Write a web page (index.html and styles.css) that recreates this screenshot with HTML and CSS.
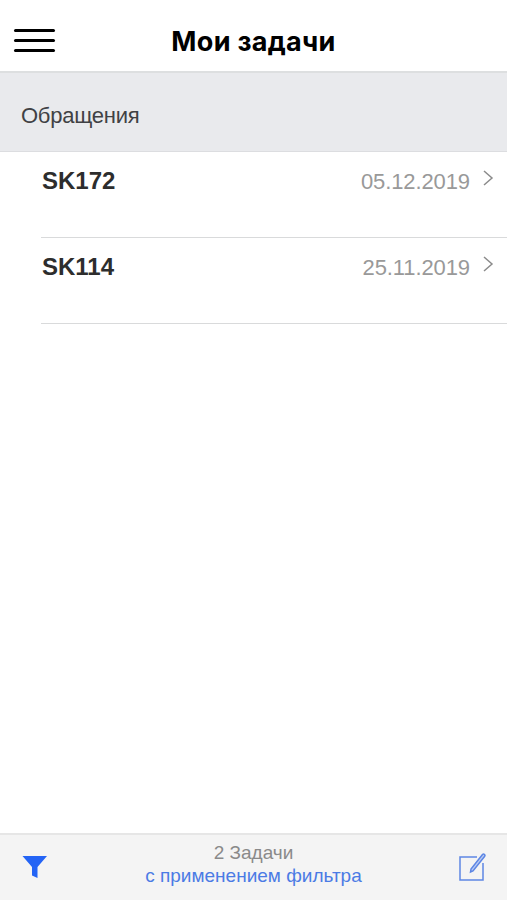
FILE: index.html
```html
<!DOCTYPE html>
<html lang="ru">
<head>
  <meta charset="UTF-8">
  <meta name="viewport" content="width=device-width, initial-scale=1.0">
  <title>Мои задачи</title>
  <link rel="stylesheet" href="styles.css">
</head>
<body>
  <header class="header">
    <button class="menu-btn" aria-label="Меню">
      <span></span>
      <span></span>
      <span></span>
    </button>
    <h1>Мои задачи</h1>
  </header>

  <main class="content">
    <h2 class="section-title">Обращения</h2>
    <ul class="task-list">
      <li class="task">
        <span class="task-name">SK172</span>
        <span class="task-date">05.12.2019</span>
        <svg class="chevron" width="12" height="18" viewBox="0 0 12 18"><path d="M2 2l8 7-8 7"/></svg>
      </li>
      <li class="task">
        <span class="task-name">SK114</span>
        <span class="task-date">25.11.2019</span>
        <svg class="chevron" width="12" height="18" viewBox="0 0 12 18"><path d="M2 2l8 7-8 7"/></svg>
      </li>
    </ul>
  </main>

  <footer class="footer">
    <button class="icon-btn" aria-label="Фильтр">
      <svg width="26" height="24" viewBox="0 0 26 24"><path class="funnel" d="M.5 1h24.500l-9.500 11v11l-5.500-2.500v-8.500z"/></svg>
    </button>
    <div class="summary">
      <div class="count">2 Задачи</div>
      <a class="filter-link">с применением фильтра</a>
    </div>
    <button class="icon-btn" aria-label="Создать">
      <svg class="compose" width="28" height="30" viewBox="0 0 28 30">
        <path d="M19 5H2v23h23V11"/>
        <path class="pencil" d="M12.500 20l.5-3L24.500 2.500q1-1 2 0t0 2L15 19z"/>
      </svg>
    </button>
  </footer>
</body>
</html>
```

FILE: styles.css
```css
* {
  box-sizing: border-box;
}
body {
  margin: 0;
  height: 100vh;
  display: flex;
  flex-direction: column;
  background-color: #fff;
  font-family: "Liberation Sans", Arial, sans-serif;
}
button {
  padding: 0;
  border: none;
  background: none;
  cursor: pointer;
}
svg {
  display: block;
}
.header {
  display: grid;
  grid-template-columns: 55px 1fr 55px;
  height: 71px;
  padding-top: 10px;
  align-items: center;
}
.menu-btn {
  display: flex;
  flex-direction: column;
  gap: 7px;
  padding-left: 14px;
}
.menu-btn span {
  width: 41px;
  height: 3px;
  border-radius: 2px;
  background-color: #000;
}
h1 {
  margin: 0;
  padding-top: 2px;
  font-family: Inter, sans-serif;
  font-size: 27px;
  font-weight: 700;
  letter-spacing: 0.3px;
  line-height: 32px;
  text-align: center;
  color: #000;
}
.content {
  flex: 1;
}
.section-title {
  height: 81px;
  margin: 0;
  padding: 6px 21px 0;
  border-top: 2px solid #dddfe0;
  border-bottom: 1px solid #dcdde0;
  background-color: #e9eaed;
  color: #404144;
  font-size: 22px;
  font-weight: normal;
  letter-spacing: -0.25px;
  line-height: 74px;
}
.task-list {
  margin: 0;
  padding: 0 0 0 41px;
  list-style: none;
}
.task {
  display: flex;
  height: 86px;
  padding: 14px 13px 0 1px;
  border-bottom: 1px solid #d9dadb;
}
.task-name {
  flex: 1;
  color: #2d2d2d;
  font-size: 24px;
  font-weight: bold;
  line-height: 29px;
}
.task-date {
  color: #999;
  font-size: 22px;
  letter-spacing: -0.1px;
  line-height: 32px;
}
.chevron {
  margin: 3px 0 0 12px;
  fill: none;
  stroke: #8b8b8b;
  stroke-width: 1.5;
}
.footer {
  display: flex;
  justify-content: space-between;
  height: 67px;
  padding: 7px 21px 0 22px;
  border-top: 2px solid #e6e6e6;
  background-color: #f4f4f4;
}
.icon-btn {
  height: 50px;
}
.funnel {
  fill: #2464f5;
}
.summary {
  margin-top: -1px;
  padding-left: 1px;
  text-align: center;
  font-size: 19px;
  line-height: 23px;
}
.count {
  color: #8a8a8a;
}
.filter-link {
  color: #4b7be5;
}
.compose {
  fill: none;
  stroke: #5d86e4;
  stroke-width: 1.5;
}
.pencil {
  fill: #b9cbf3;
}
```
